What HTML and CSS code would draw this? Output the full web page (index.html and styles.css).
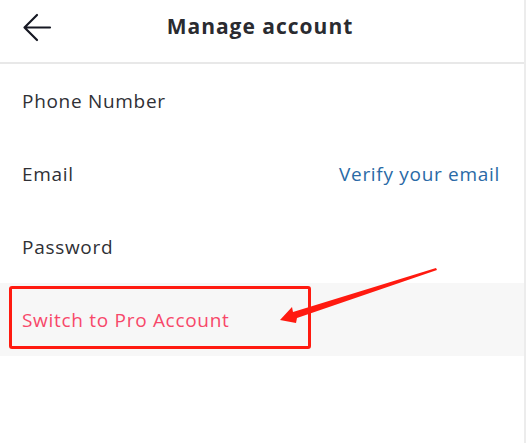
FILE: index.html
```html
<!DOCTYPE html>
<html>
<head>
<meta charset="utf-8">
<link rel="stylesheet" href="styles.css">
</head>
<body>
<div class="screen">
  <header class="topbar">
    <svg class="back" width="30" height="30" viewBox="0 0 30 30">
      <path d="M15 2 L2.5 14.5 L15 27 M2.5 14.5 H28" fill="none" stroke="#161823" stroke-width="2.2" stroke-linecap="round" stroke-linejoin="round"/>
    </svg>
    <h1 class="title">Manage account</h1>
  </header>
  <div class="list">
    <div class="row"><span class="label">Phone Number</span></div>
    <div class="row"><span class="label">Email</span><span class="action">Verify your email</span></div>
    <div class="row"><span class="label">Password</span></div>
    <div class="row row-pro"><span class="label pro">Switch to Pro Account</span></div>
  </div>
  <div class="highlight"></div>
  <svg class="pointer" width="526" height="443" viewBox="0 0 526 443">
    <polygon points="436,268 437,270 297,318 296,323 280,320 292,307 293,312" fill="#ff1a10"/>
  </svg>
</div>
</body>
</html>
```
FILE: styles.css
```css
* { box-sizing: border-box; }
html, body { margin: 0; padding: 0; background: #fff; }
body { font-family: "Open Sans", "Lato", sans-serif; }
.screen {
  position: relative;
  width: 526px;
  height: 443px;
  background: #fff;
  border-right: 2px solid #ececec;
  overflow: hidden;
}
.topbar {
  height: 64px;
  border-bottom: 2px solid #e8e8e8;
  display: flex;
  align-items: center;
  justify-content: center;
  position: relative;
}
.back {
  position: absolute;
  left: 22px;
  top: 13px;
}
.title {
  margin: 0;
  font-size: 21px;
  font-weight: 700;
  color: #2a2b30;
  letter-spacing: 1px;
  transform: translate(-2px, -5px);
}
.list { display: flex; flex-direction: column; }
.row {
  height: 73px;
  padding: 0 24px 0 22px;
  display: flex;
  align-items: center;
  justify-content: space-between;
  font-size: 19px;
  letter-spacing: 0.7px;
  color: #2f3035;
}
.action { color: #2a6aa6; }
.row-pro { background: #f7f7f7; }
.pro { color: #f7486a; }
.highlight {
  position: absolute;
  left: 9px;
  top: 286px;
  width: 302px;
  height: 63px;
  border: 3px solid #ff1a10;
  border-radius: 3px;
}
.pointer { position: absolute; left: 0; top: 0; }
```
